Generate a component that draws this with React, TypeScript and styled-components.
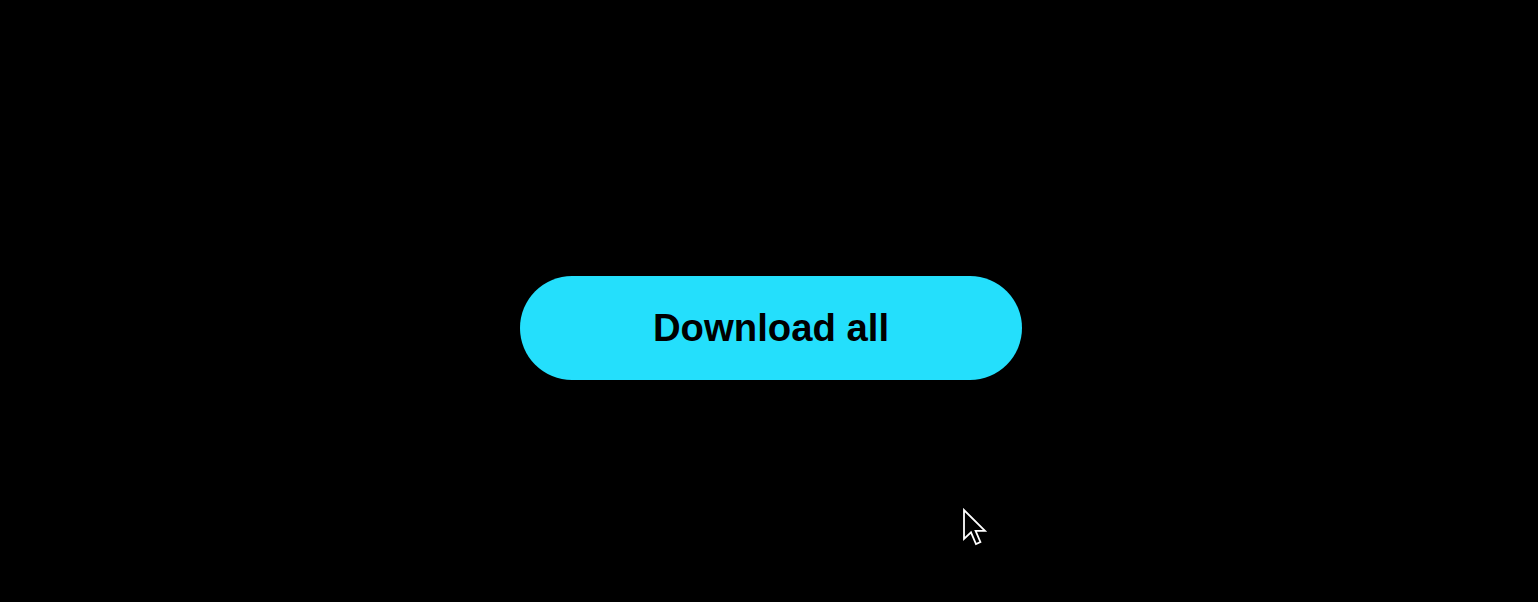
import React from "react";
import styled, { createGlobalStyle } from "styled-components";

const Global = createGlobalStyle`
  html, body {
    margin: 0;
    padding: 0;
    background: #000;
  }
  body {
    font-family: "Liberation Sans", Arial, sans-serif;
  }
`;

const Page = styled.div`
  position: relative;
  width: 1538px;
  height: 602px;
  background: #000;
  display: flex;
  justify-content: center;
  align-items: flex-start;
  padding: 276px 0 0 4px;
  box-sizing: border-box;
  overflow: hidden;
`;

const Button = styled.button`
  width: 502px;
  height: 104px;
  border: none;
  border-radius: 52px;
  background: #24dffc;
  color: #000;
  font-family: "Liberation Sans", Arial, sans-serif;
  font-weight: 700;
  font-size: 38.3px;
  display: flex;
  align-items: center;
  justify-content: center;
  padding: 0;
  cursor: pointer;
`;

const Cursor = styled.svg`
  position: absolute;
  left: 962px;
  top: 508px;
  pointer-events: none;
`;

export default function App() {
  return (
    <>
      <Global />
      <Page>
        <Button>Download all</Button>
        <Cursor width="26" height="38" viewBox="0 0 13 19">
          <path
            d="M1 1 L1 15.5 L4.5 12.2 L7 18 L9.2 17 L6.8 11.4 L11.5 11.4 Z"
            fill="#000"
            stroke="#fff"
            strokeWidth="0.9"
            strokeLinejoin="miter"
          />
        </Cursor>
      </Page>
    </>
  );
}
